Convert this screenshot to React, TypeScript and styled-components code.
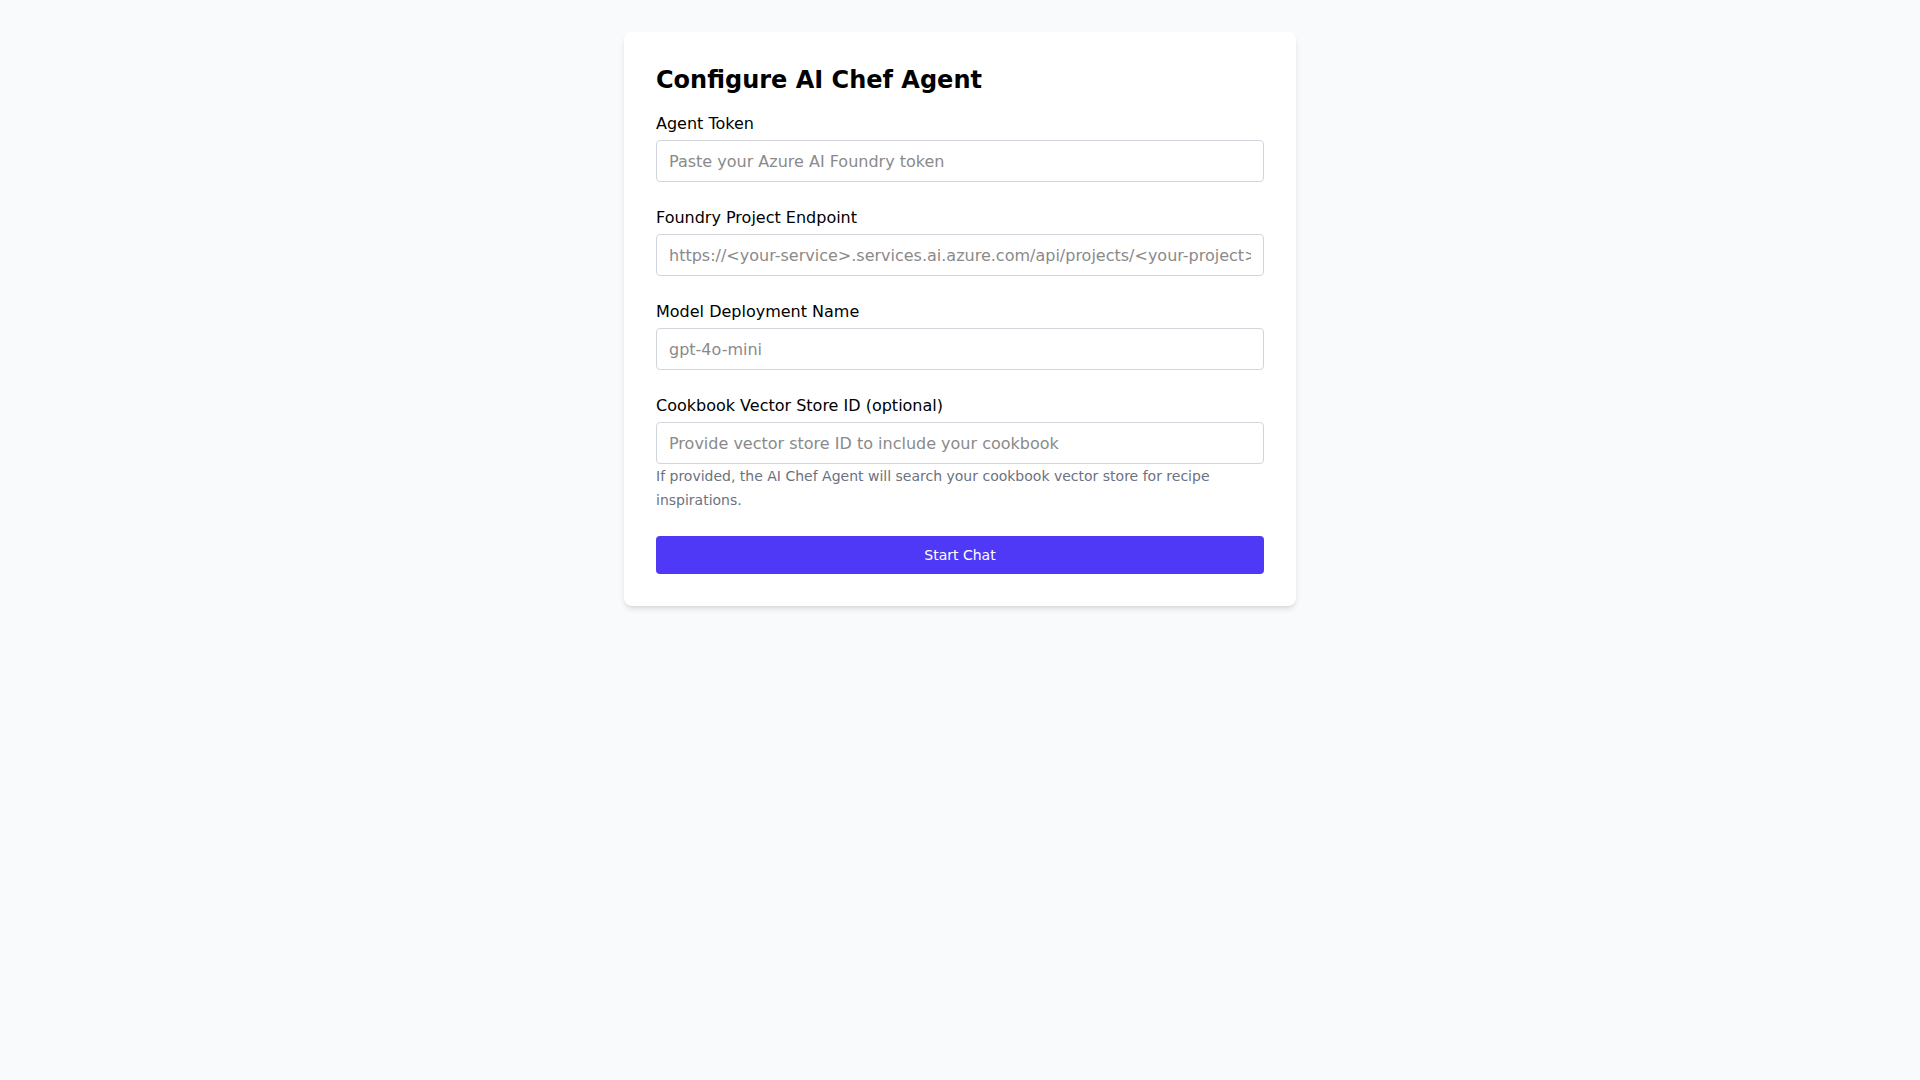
import React from 'react';
import styled, { createGlobalStyle } from 'styled-components';

const GlobalStyle = createGlobalStyle`
  * { box-sizing: border-box; }
  html, body {
    margin: 0;
    background: #f9fafb;
    font-family: "DejaVu Sans", Verdana, sans-serif;
    color: #000;
  }
`;

const Page = styled.div`
  min-height: 100vh;
  padding-top: 32px;
  display: flex;
  justify-content: center;
  align-items: flex-start;
`;

const Card = styled.form`
  width: 672px;
  background: #fff;
  border-radius: 8px;
  padding: 32px;
  box-shadow: 0 4px 6px -1px rgba(0, 0, 0, 0.1), 0 2px 4px -2px rgba(0, 0, 0, 0.1);
  display: flex;
  flex-direction: column;
`;

const Title = styled.h2`
  margin: 0 0 16px;
  font-size: 24px;
  line-height: 32px;
  font-weight: 700;
  color: #000;
`;

const Field = styled.div`
  display: flex;
  flex-direction: column;
  margin-bottom: 24px;
`;

const Label = styled.label`
  font-size: 16px;
  line-height: 24px;
  margin-bottom: 4px;
`;

const Input = styled.input`
  width: 100%;
  height: 42px;
  padding: 8px 12px;
  border: 1px solid #d1d5db;
  border-radius: 4px;
  font-family: inherit;
  font-size: 16px;
  line-height: 24px;
  color: #111827;
  background: #fff;
  outline: none;

  &::placeholder {
    color: #8a8a8a;
  }
`;

const Hint = styled.p`
  margin: 0;
  font-size: 14px;
  line-height: 24px;
  color: #6b7280;
`;

const SubmitButton = styled.button`
  width: 100%;
  height: 38px;
  border: none;
  border-radius: 4px;
  background: #4f39f6;
  color: #fff;
  font-family: inherit;
  font-size: 14px;
  cursor: pointer;
`;

const fields = [
  { id: 'token', label: 'Agent Token', placeholder: 'Paste your Azure AI Foundry token' },
  {
    id: 'endpoint',
    label: 'Foundry Project Endpoint',
    placeholder: 'https://<your-service>.services.ai.azure.com/api/projects/<your-project>',
  },
  { id: 'model', label: 'Model Deployment Name', placeholder: 'gpt-4o-mini' },
  {
    id: 'vector',
    label: 'Cookbook Vector Store ID (optional)',
    placeholder: 'Provide vector store ID to include your cookbook',
    hint: 'If provided, the AI Chef Agent will search your cookbook vector store for recipe inspirations.',
  },
];

const App: React.FC = () => {
  return (
    <>
      <GlobalStyle />
      <Page>
        <Card onSubmit={(e) => e.preventDefault()}>
          <Title>Configure AI Chef Agent</Title>
          {fields.map((f) => (
            <Field key={f.id}>
              <Label htmlFor={f.id}>{f.label}</Label>
              <Input id={f.id} placeholder={f.placeholder} />
              {f.hint && <Hint>{f.hint}</Hint>}
            </Field>
          ))}
          <SubmitButton type="submit">Start Chat</SubmitButton>
        </Card>
      </Page>
    </>
  );
};

export default App;
